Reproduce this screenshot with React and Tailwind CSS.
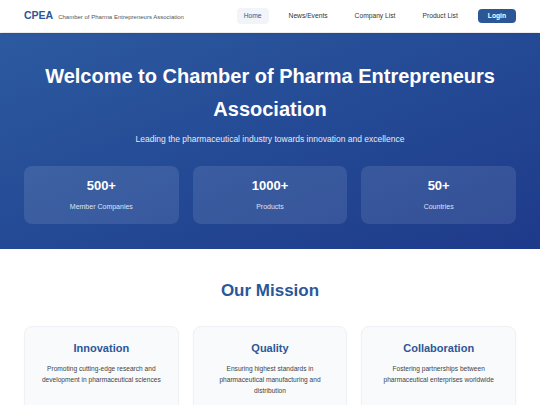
import React from "react";

const stats = [
  { value: "500+", label: "Member Companies" },
  { value: "1000+", label: "Products" },
  { value: "50+", label: "Countries" },
];

const mission = [
  {
    title: "Innovation",
    text: "Promoting cutting-edge research and development in pharmaceutical sciences",
  },
  {
    title: "Quality",
    text: "Ensuring highest standards in pharmaceutical manufacturing and distribution",
  },
  {
    title: "Collaboration",
    text: "Fostering partnerships between pharmaceutical enterprises worldwide",
  },
];

const navItems = ["Home", "News/Events", "Company List", "Product List"];

export default function App() {
  return (
    <div className="min-h-screen bg-white font-['Liberation_Sans',Arial,sans-serif]">
      {/* Header */}
      <header className="relative z-10 flex h-[32px] items-center justify-between bg-white px-6 shadow-[0_1px_3px_rgba(0,0,0,0.12)]">
        <div className="flex items-baseline gap-[5px]">
          <span className="text-[10.5px] font-bold text-[#2b5797]">CPEA</span>
          <span className="text-[6px] text-[#555]">
            Chamber of Pharma Entrepreneurs Association
          </span>
        </div>
        <nav className="flex items-center gap-[13px]">
          {navItems.map((item, i) => (
            <a
              key={item}
              className={`rounded px-[7px] py-[4px] text-[6.7px] leading-[8px] ${
                i === 0 ? "bg-[#f1f5f9] text-[#2b5797]" : "text-[#333]"
              }`}
            >
              {item}
            </a>
          ))}
          <button className="rounded-[4px] bg-[#2b5797] px-[10px] py-[3px] text-[6.7px] font-bold leading-[8px] text-white">
            Login
          </button>
        </nav>
      </header>

      {/* Hero */}
      <section className="mt-px bg-gradient-to-br from-[#2c5aa0] to-[#1e3a8a] px-6 pb-[25px] pt-[27px] text-center text-white">
        <h1 className="text-[20px] font-bold leading-[33px]">
          Welcome to Chamber of Pharma Entrepreneurs
          <br />
          Association
        </h1>
        <p className="mt-[7px] text-[8.5px] text-[#e3eaf6]">
          Leading the pharmaceutical industry towards innovation and excellence
        </p>
        <div className="mt-[20px] grid grid-cols-3 gap-[14px]">
          {stats.map((s) => (
            <div
              key={s.label}
              className="flex h-[58px] flex-col items-center justify-center rounded-lg bg-white/10"
            >
              <div className="text-[13px] font-bold leading-none">{s.value}</div>
              <div className="mt-[11px] text-[7px] leading-none text-[#dbe4f3]">
                {s.label}
              </div>
            </div>
          ))}
        </div>
      </section>

      {/* Mission */}
      <section className="px-6 pt-[31px]">
        <h2 className="text-center text-[17px] font-bold leading-[22px] text-[#2b5797]">
          Our Mission
        </h2>
        <div className="mt-[24px] grid grid-cols-3 gap-[14px]">
          {mission.map((m) => (
            <div
              key={m.title}
              className="h-[90px] rounded-lg border border-[#eef1f5] bg-[#f8fafc] px-[10px] pt-[14px] text-center shadow-[0_1px_2px_rgba(0,0,0,0.04)]"
            >
              <h3 className="text-[11px] font-bold leading-[14px] text-[#2b5797]">
                {m.title}
              </h3>
              <p className="mt-[8px] text-[6.6px] leading-[11px] text-[#444]">
                {m.text}
              </p>
            </div>
          ))}
        </div>
      </section>
    </div>
  );
}
